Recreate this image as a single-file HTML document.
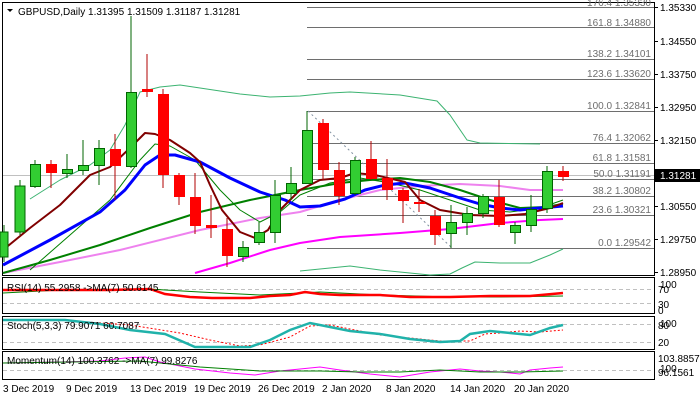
<!DOCTYPE html>
<html><head><meta charset="utf-8"><style>
html,body{margin:0;padding:0;background:#fff}
svg{display:block;font-family:"Liberation Sans",sans-serif;font-size:10px}
</style></head><body>
<svg width="700" height="400" xmlns="http://www.w3.org/2000/svg">
<rect width="700" height="400" fill="#fff"/>
<!-- panel frames -->
<g fill="none" stroke="#000" stroke-width="1">
<rect x="2.5" y="2.5" width="652" height="273"/>
<rect x="2.5" y="277.5" width="652" height="36"/>
<rect x="2.5" y="316.5" width="652" height="33"/>
<rect x="2.5" y="351.5" width="652" height="28"/>
</g>
<!-- fib lines -->
<g stroke="#6e6e6e" stroke-width="1">
<line x1="307" y1="7.5" x2="654" y2="7.5"/>
<line x1="307" y1="27.5" x2="654" y2="27.5"/>
<line x1="307" y1="59.5" x2="654" y2="59.5"/>
<line x1="307" y1="79.5" x2="654" y2="79.5"/>
<line x1="307" y1="111.5" x2="654" y2="111.5"/>
<line x1="307" y1="143.5" x2="654" y2="143.5"/>
<line x1="307" y1="163.5" x2="654" y2="163.5"/>
<line x1="307" y1="179.5" x2="654" y2="179.5"/>
<line x1="307" y1="196.5" x2="654" y2="196.5"/>
<line x1="307" y1="215.5" x2="654" y2="215.5"/>
<line x1="307" y1="248.5" x2="654" y2="248.5"/>
</g>
<line x1="3" y1="175.5" x2="654" y2="175.5" stroke="#c0c0c0"/>
<line x1="308" y1="111" x2="452" y2="248" stroke="#8090a0" stroke-dasharray="2,3"/>
<g fill="#6e6e6e" text-anchor="end" font-size="10">
<text x="651" y="6">176.4 1.35330</text>
<text x="651" y="26">161.8 1.34880</text>
<text x="651" y="57">138.2 1.34101</text>
<text x="651" y="77">123.6 1.33620</text>
<text x="651" y="109">100.0 1.32841</text>
<text x="651" y="141">76.4 1.32062</text>
<text x="651" y="161">61.8 1.31581</text>
<text x="651" y="177">50.0 1.31191</text>
<text x="651" y="194">38.2 1.30802</text>
<text x="651" y="213">23.6 1.30321</text>
<text x="651" y="246">0.0 1.29542</text>
</g>
<!-- indicators lines main -->
<g fill="none" stroke-linejoin="round">
<polyline stroke="#3cb371" stroke-width="1" points="30,199 60,180 90,165 110,150 125,125 140,92 160,87 180,85 200,88 240,94 270,97 300,96 330,93 350,92 400,95 437,101 450,115 467,140 480,143 540,144"/>
<polyline stroke="#3cb371" stroke-width="1" points="300,271 330,268 350,266 380,270 430,275 450,274 462,268 475,262 500,263 530,263 550,255 563,249"/>
<polyline stroke="#ee82ee" stroke-width="2" points="3,273 60,262 120,250 200,230 260,218 300,212 340,200 380,190 420,186 460,184 500,186 530,190 563,190"/>
<polyline stroke="#ff00ff" stroke-width="2" points="195,273 230,263 270,250 300,243 340,237 400,233 450,229 500,223 540,220 563,219"/>
<polyline stroke="#008000" stroke-width="2" points="3,273 50,260 100,245 150,228 200,212 250,200 300,190 340,183 370,180 400,178 430,182 460,190 490,200 520,208 545,207 563,204"/>
<polyline stroke="#008000" stroke-width="1" points="30,270 70,235 110,200 140,160 155,144 170,146 195,160 220,190 240,210 260,222 280,212 300,195 330,183 360,178 390,183 420,190 450,200 480,210 510,212 540,208 563,200"/>
<polyline stroke="#0000ff" stroke-width="3" points="3,265 50,240 100,212 125,190 145,165 160,155 175,155 200,162 230,178 260,192 285,200 300,207 320,206 345,199 365,190 385,185 405,183 430,188 460,198 480,204 500,208 520,210 540,208 563,206"/>
<polyline stroke="#800000" stroke-width="2" points="3,250 30,228 60,205 90,175 110,167 130,148 145,133 155,134 170,140 190,153 200,162 210,185 222,210 240,232 255,238 268,230 280,210 300,190 320,180 340,178 355,173 375,175 405,182 420,200 440,210 470,215 500,216 525,214 550,208 563,203"/>
</g>
<!-- candles -->
<g stroke="#006400" stroke-width="1">
<line x1="4" y1="225" x2="4" y2="262"/><rect x="0" y="232" width="8" height="25" fill="#32cd32"/>
<line x1="20" y1="180" x2="20" y2="235"/><rect x="15" y="186" width="10" height="46" fill="#32cd32"/>
<line x1="35" y1="160" x2="35" y2="188"/><rect x="30.5" y="164.5" width="10" height="22" fill="#32cd32"/>
<line x1="67" y1="154" x2="67" y2="178"/><rect x="62.5" y="169.5" width="10" height="4" fill="#32cd32"/>
<line x1="83" y1="140" x2="83" y2="175"/><rect x="78.5" y="165.5" width="10" height="5" fill="#32cd32"/>
<line x1="99" y1="140" x2="99" y2="185"/><rect x="94.5" y="148.5" width="10" height="17" fill="#32cd32"/>
<line x1="131" y1="16" x2="131" y2="168"/><rect x="126.5" y="92.5" width="10" height="74" fill="#32cd32"/>
<line x1="243" y1="241" x2="243" y2="262"/><rect x="238.5" y="247.5" width="10" height="9" fill="#32cd32"/>
<line x1="259" y1="222" x2="259" y2="245"/><rect x="254.5" y="232.5" width="10" height="10" fill="#32cd32"/>
<line x1="275" y1="180" x2="275" y2="243"/><rect x="270.5" y="195.5" width="10" height="37" fill="#32cd32"/>
<line x1="291" y1="167" x2="291" y2="200"/><rect x="286.5" y="183.5" width="10" height="10" fill="#32cd32"/>
<line x1="307" y1="111" x2="307" y2="183"/><rect x="302.5" y="130.5" width="10" height="53" fill="#32cd32"/>
<line x1="355" y1="157" x2="355" y2="195"/><rect x="350.5" y="160.5" width="10" height="33" fill="#32cd32"/>
<line x1="451" y1="205" x2="451" y2="248"/><rect x="446.5" y="222.5" width="10" height="11" fill="#32cd32"/>
<line x1="467" y1="207" x2="467" y2="235"/><rect x="462.5" y="213.5" width="10" height="9" fill="#32cd32"/>
<line x1="483" y1="194" x2="483" y2="218"/><rect x="478.5" y="196.5" width="10" height="17" fill="#32cd32"/>
<line x1="515" y1="222" x2="515" y2="244"/><rect x="510.5" y="225.5" width="10" height="7" fill="#32cd32"/>
<line x1="531" y1="195" x2="531" y2="232"/><rect x="526.5" y="209.5" width="10" height="16" fill="#32cd32"/>
<line x1="547" y1="166" x2="547" y2="213"/><rect x="542.5" y="171.5" width="10" height="37" fill="#32cd32"/>
</g>
<g stroke="#b00000" stroke-width="1">
<line x1="51" y1="160" x2="51" y2="188"/>
<line x1="115" y1="134" x2="115" y2="200"/>
<line x1="147" y1="54" x2="147" y2="97"/>
<line x1="163" y1="89" x2="163" y2="188"/>
<line x1="179" y1="173" x2="179" y2="205"/>
<line x1="195" y1="173" x2="195" y2="234"/>
<line x1="211" y1="195" x2="211" y2="238"/>
<line x1="227" y1="218" x2="227" y2="267"/>
<line x1="323" y1="119" x2="323" y2="180"/>
<line x1="339" y1="162" x2="339" y2="205"/>
<line x1="371" y1="141" x2="371" y2="180"/>
<line x1="387" y1="159" x2="387" y2="200"/>
<line x1="403" y1="188" x2="403" y2="223"/>
<line x1="419" y1="189" x2="419" y2="212"/>
<line x1="435" y1="210" x2="435" y2="245"/>
<line x1="499" y1="180" x2="499" y2="227"/>
<line x1="563" y1="166" x2="563" y2="181"/>
</g>
<g fill="#ff0000">
<rect x="46" y="164" width="11" height="9"/>
<rect x="110" y="149" width="11" height="17"/>
<rect x="142" y="89" width="11" height="3"/>
<rect x="158" y="94" width="11" height="81"/>
<rect x="174" y="175" width="11" height="22"/>
<rect x="190" y="197" width="11" height="29"/>
<rect x="206" y="225" width="11" height="3"/>
<rect x="222" y="229" width="11" height="27"/>
<rect x="318" y="123" width="11" height="47"/>
<rect x="334" y="170" width="11" height="26"/>
<rect x="366" y="159" width="11" height="20"/>
<rect x="382" y="178" width="11" height="12"/>
<rect x="398" y="190" width="11" height="11"/>
<rect x="414" y="202" width="11" height="2"/>
<rect x="430" y="216" width="11" height="19"/>
<rect x="494" y="197" width="11" height="28"/>
<rect x="558" y="171" width="11" height="6"/>
</g>
<!-- header -->
<polygon points="7,9 13,9 10,12" fill="#000"/>
<text x="18" y="15" fill="#000">GBPUSD,Daily  1.31395 1.31509 1.31187 1.31281</text>
<!-- price axis -->
<g stroke="#000"><line x1="654" y1="7.5" x2="658" y2="7.5"/><line x1="654" y1="41.5" x2="658" y2="41.5"/><line x1="654" y1="74.5" x2="658" y2="74.5"/><line x1="654" y1="107.5" x2="658" y2="107.5"/><line x1="654" y1="140.5" x2="658" y2="140.5"/><line x1="654" y1="206.5" x2="658" y2="206.5"/><line x1="654" y1="239.5" x2="658" y2="239.5"/><line x1="654" y1="272.5" x2="658" y2="272.5"/></g>
<g fill="#000">
<text x="660" y="11">1.35330</text><text x="660" y="45">1.34550</text><text x="660" y="78">1.33750</text><text x="660" y="111">1.32950</text><text x="660" y="144">1.32150</text><text x="660" y="210">1.30550</text><text x="660" y="243">1.29750</text><text x="660" y="276">1.28950</text>
</g>
<rect x="655" y="169" width="45" height="13" fill="#000"/>
<text x="660" y="179" fill="#fff">1.31281</text>
<!-- RSI -->
<g stroke="#c0c0c0" stroke-dasharray="4,3"><line x1="3" y1="289.5" x2="654" y2="289.5"/><line x1="3" y1="303.5" x2="654" y2="303.5"/>
<line x1="3" y1="324.5" x2="654" y2="324.5"/><line x1="3" y1="342.5" x2="654" y2="342.5"/><line x1="3" y1="370.5" x2="654" y2="370.5"/></g>
<polyline fill="none" stroke="#008000" stroke-width="1" points="3,293 60,290 150,289 165,290 200,292 260,295 320,292 380,295 450,297 500,297 563,296"/>
<polyline fill="none" stroke="#ff0000" stroke-width="2.5" points="3,290 110,290 150,289 165,294 190,297 212,298 250,298 270,296 290,295 305,292 320,294 340,295 380,295 410,297 450,297 490,296 530,296 563,293"/>
<text x="7" y="291" fill="#000" font-size="10">RSI(14) 55.2958  -&gt;MA(7) 50.6145</text>
<!-- Stoch -->
<polyline fill="none" stroke="#ff0000" stroke-width="1" stroke-dasharray="2,2" points="3,320 60,320 130,325 180,333 210,340 240,346 260,345 290,337 310,326 330,325 350,329 380,335 410,338 440,341 470,341 485,334 500,333 520,331 540,332 563,330"/>
<polyline fill="none" stroke="#20b2aa" stroke-width="2.5" points="3,320 65,320 100,324 130,330 165,334 195,347 250,347 270,340 290,330 310,323 330,327 350,331 380,334 410,339 440,342 460,341 470,334 490,331 510,333 530,335 550,328 563,325"/>
<text x="7" y="329" fill="#000" font-size="10">Stoch(5,3,3) 79.9071 60.7087</text>
<!-- Momentum -->
<polyline fill="none" stroke="#ff00ff" stroke-width="1" points="3,363 60,362 100,361 125,358 145,357 160,362 195,369 230,373 255,375 280,371 300,369 320,367 340,370 370,374 400,377 430,372 460,369 480,371 500,372 520,374 530,370 550,368 563,367"/>
<polyline fill="none" stroke="#008000" stroke-width="1" points="3,363 140,361 160,363 200,367 260,371 320,371 360,372 400,372 440,370 480,372 520,372 563,371"/>
<text x="7" y="364" fill="#000" font-size="10">Momentum(14) 100.3762  -&gt;MA(7) 99.8276</text>
<!-- indicator axes -->
<g fill="#000" font-size="10">
<text x="660" y="288">100</text><text x="658" y="293">70</text><text x="658" y="308">30</text><text x="658" y="314">0</text>
<text x="660" y="327">100</text><text x="658" y="329">80</text><text x="658" y="346">20</text>
<text x="658" y="362">103.8857</text><text x="660" y="372">100</text><text x="658" y="376">96.1561</text>
</g>
<!-- dates -->
<g fill="#000" font-size="10">
<text x="3" y="392">3 Dec 2019</text><text x="66" y="392">9 Dec 2019</text><text x="130" y="392">13 Dec 2019</text><text x="194" y="392">19 Dec 2019</text><text x="258" y="392">26 Dec 2019</text><text x="322" y="392">2 Jan 2020</text><text x="386" y="392">8 Jan 2020</text><text x="450" y="392">14 Jan 2020</text><text x="514" y="392">20 Jan 2020</text>
</g>
</svg>
</body></html>
